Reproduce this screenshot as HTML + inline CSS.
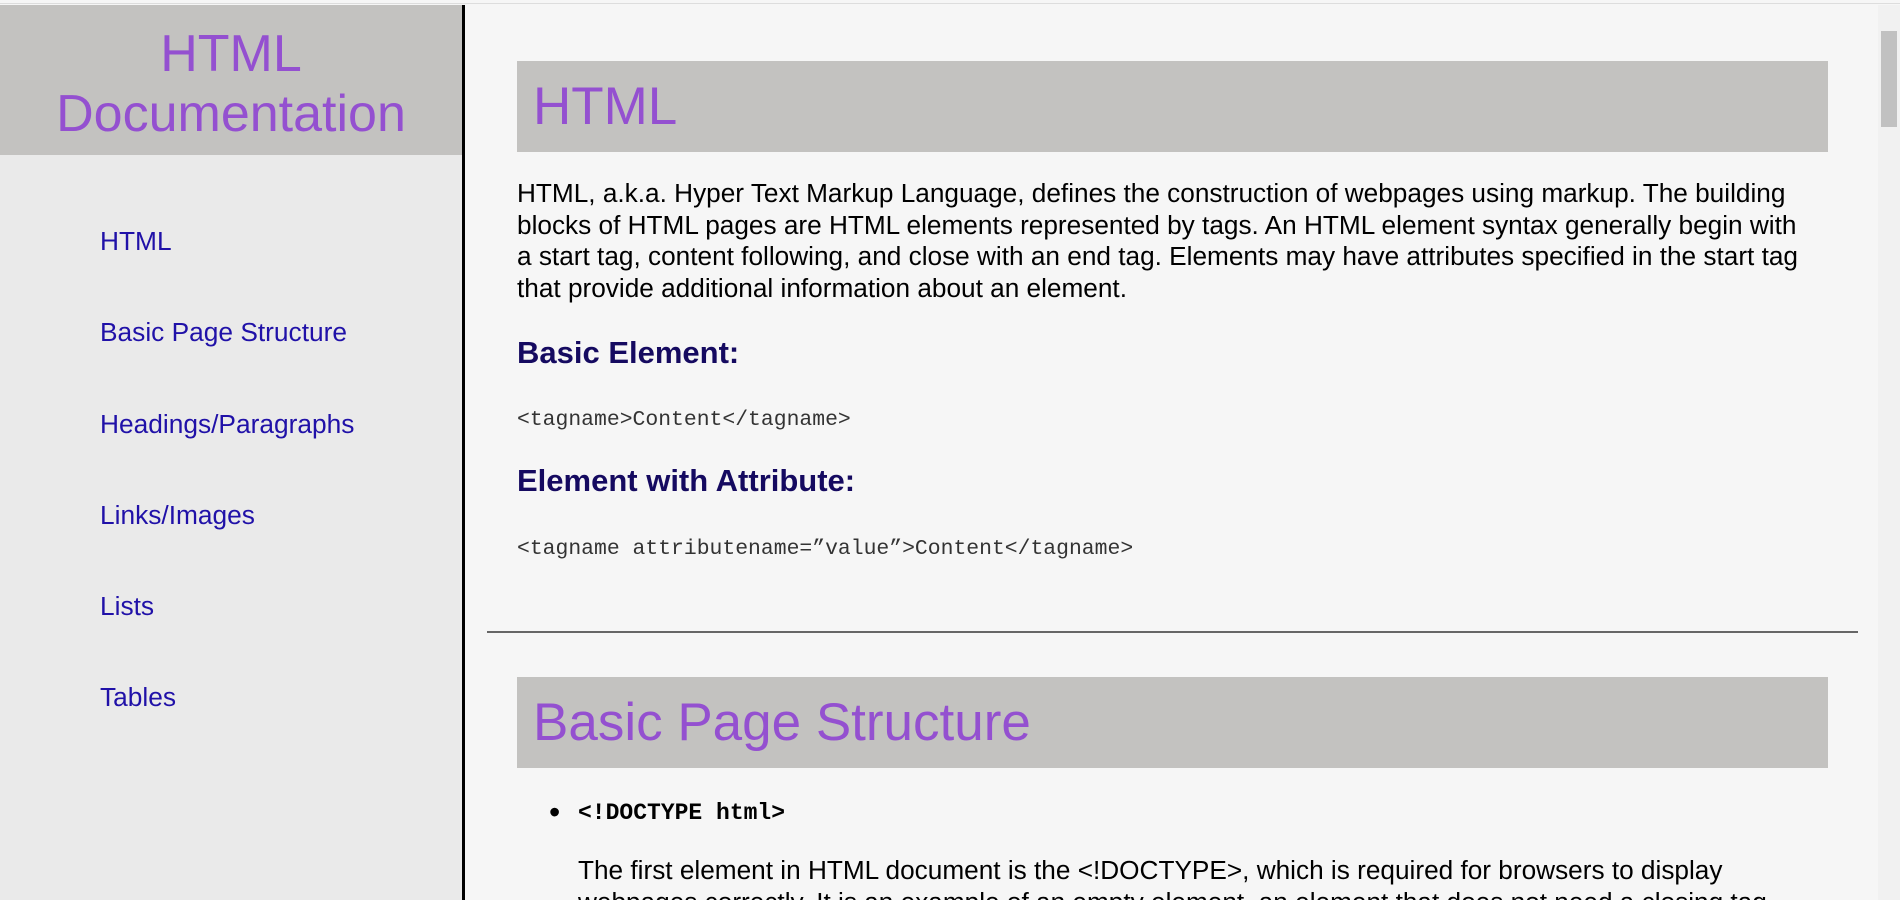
<!DOCTYPE html>
<html style="overflow:hidden;height:900px"><head><style>
body{margin:0;width:1900px;height:900px;overflow:hidden;background:#f6f6f6;position:relative;font-family:"Liberation Sans",Arial,sans-serif;}
.a{position:absolute;white-space:nowrap;}
#top{position:absolute;left:0;top:0;width:1900px;height:3px;background:#f6f6f6;border-bottom:1px solid #ddd;}
#side{position:absolute;left:0;top:5px;width:462px;height:895px;background:#eaeaea;border-right:3px solid #000;overflow:hidden;}
#sh{position:absolute;left:0;top:0;width:462px;height:150px;background:#c3c2c0;}
#sh div{position:absolute;left:0;width:462px;text-align:center;color:#9450d0;font-size:52px;line-height:60px;top:19px;}
.nav{position:absolute;left:100px;color:#2011a8;font-size:26.3px;line-height:30px;}
.h1{position:absolute;left:517px;width:1311px;background:#c3c2c0;color:#9450d0;font-size:53px;height:91px;line-height:91px;}
.h1 span{padding-left:16px;}
.p{position:absolute;left:517px;font-size:26.2px;line-height:31.5px;color:#000;white-space:nowrap;}
.h3{position:absolute;left:517px;font-size:31px;font-weight:bold;color:#150a60;line-height:34px;}
.code{position:absolute;left:517px;font-family:"Liberation Mono",monospace;font-size:21.4px;color:#333;line-height:26px;}
#sb{position:absolute;left:1878px;top:5px;width:22px;height:895px;background:#f1f1f1;}
#th{position:absolute;left:1881px;top:31px;width:16px;height:96px;background:#c1c1c1;}
</style></head><body>
<div id="top"></div>
<div id="side">
<div id="sh"><div>HTML<br>Documentation</div></div>
<div class="nav" style="top:221px">HTML</div>
<div class="nav" style="top:312px">Basic Page Structure</div>
<div class="nav" style="top:404px">Headings/Paragraphs</div>
<div class="nav" style="top:495px">Links/Images</div>
<div class="nav" style="top:586px">Lists</div>
<div class="nav" style="top:677px">Tables</div>
</div>
<div class="h1" style="top:61px"><span>HTML</span></div>
<div class="p" style="top:178px">HTML, a.k.a. Hyper Text Markup Language, defines the construction of webpages using markup. The building<br>blocks of HTML pages are HTML elements represented by tags. An HTML element syntax generally begin with<br>a start tag, content following, and close with an end tag. Elements may have attributes specified in the start tag<br>that provide additional information about an element.</div>
<div class="h3" style="top:336px">Basic Element:</div>
<div class="code a" style="top:407px">&lt;tagname&gt;Content&lt;/tagname&gt;</div>
<div class="h3" style="top:464px">Element with Attribute:</div>
<div class="code a" style="top:536px">&lt;tagname attributename=”value”&gt;Content&lt;/tagname&gt;</div>
<div style="position:absolute;left:487px;top:631px;width:1371px;height:2px;background:#666"></div>
<div class="h1" style="top:677px"><span>Basic Page Structure</span></div>
<div class="a" style="left:549px;top:795px;font-size:32px;line-height:34px">•</div>
<div class="a" style="left:578px;top:800px;font-family:'Liberation Mono',monospace;font-weight:bold;font-size:23px;line-height:26px;color:#000">&lt;!DOCTYPE html&gt;</div>
<div class="p" style="left:578px;top:855px;height:45px;overflow:hidden">The first element in HTML document is the &lt;!DOCTYPE&gt;, which is required for browsers to display<br>webpages correctly. It is an example of an empty element, an element that does not need a closing tag.</div>
<div id="sb"></div><div id="th"></div>
</body></html>
